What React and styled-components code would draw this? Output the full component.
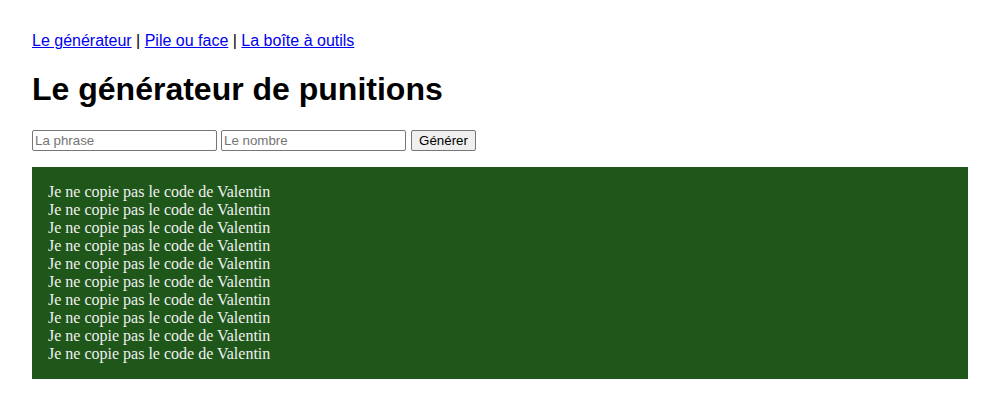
import React from "react";
import styled, { createGlobalStyle } from "styled-components";

const Global = createGlobalStyle`
  html, body { margin: 0; padding: 0; background: #fff; }
  body { font-family: "Liberation Sans", Arial, sans-serif; font-size: 16px; }
`;

const Page = styled.div`
  padding: 32px;
`;

const Nav = styled.nav`
  line-height: 18px;
  color: #000;
`;

const NavLink = styled.a`
  color: #0000ee;
  text-decoration: underline;
`;

const Title = styled.h1`
  font-size: 32px;
  font-weight: bold;
  margin: 21.44px 0;
  line-height: 37px;
`;

const Form = styled.form`
  display: flex;
  align-items: center;
  gap: 4px;
  margin: 0;
`;

const Field = styled.input`
  box-sizing: border-box;
  width: 185px;
  height: 21px;
  padding: 1px 2px;
  border: 1px solid #767676;
  border-radius: 2px;
  font-family: "Liberation Sans", Arial, sans-serif;
  font-size: 13.33px;
  color: #000;
  &::placeholder { color: #757575; }
`;

const Button = styled.button`
  box-sizing: border-box;
  margin-left: 1px;
  width: 65px;
  height: 21px;
  padding: 1px 6px;
  border: 1px solid #767676;
  border-radius: 2px;
  background: #efefef;
  font-family: "Liberation Sans", Arial, sans-serif;
  font-size: 13.33px;
  color: #000;
`;

const Board = styled.div`
  margin-top: 16px;
  background: #1f561a;
  padding: 16px;
  color: #f0f0f0;
  font-family: "Liberation Serif", "Times New Roman", serif;
  font-size: 16px;
  line-height: 18px;
`;

const Line = styled.div``;

export default function App() {
  const lines = Array.from({ length: 10 }, () => "Je ne copie pas le code de Valentin");
  return (
    <>
      <Global />
      <Page>
        <Nav>
          <NavLink href="#">Le générateur</NavLink> | <NavLink href="#">Pile ou face</NavLink> |{" "}
          <NavLink href="#">La boîte à outils</NavLink>
        </Nav>
        <Title>Le générateur de punitions</Title>
        <Form onSubmit={(e) => e.preventDefault()}>
          <Field placeholder="La phrase" />
          <Field placeholder="Le nombre" />
          <Button type="submit">Générer</Button>
        </Form>
        <Board>
          {lines.map((l, i) => (
            <Line key={i}>{l}</Line>
          ))}
        </Board>
      </Page>
    </>
  );
}
